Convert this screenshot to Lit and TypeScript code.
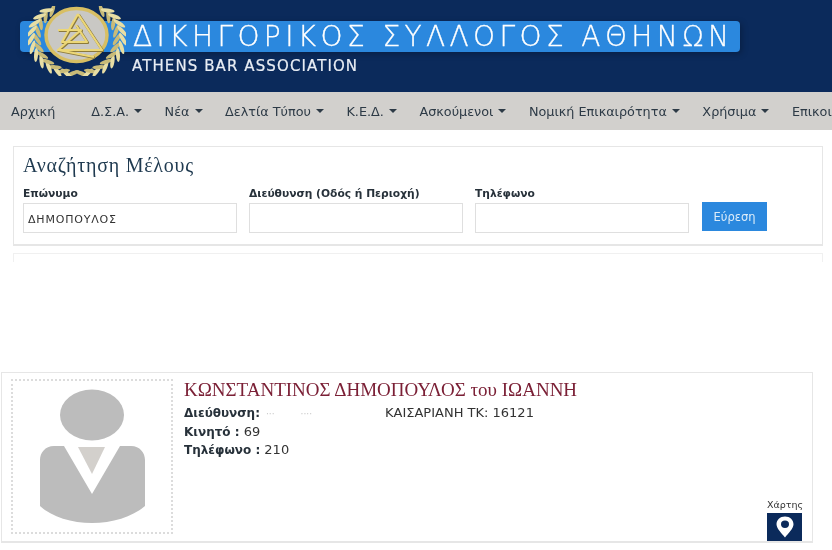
import { LitElement, html, css, svg } from "lit";
import { customElement } from "lit/decorators.js";

const NAV: [string, boolean][] = [
  ["Αρχική", false], ["Δ.Σ.Α.", true], ["Νέα", true], ["Δελτία Τύπου", true], ["Κ.Ε.Δ.", true],
  ["Ασκούμενοι", true], ["Νομική Επικαιρότητα", true], ["Χρήσιμα", true], ["Επικοινωνία", false],
];

function wreath(side: number) {
  const out = [];
  for (let i = 0; i < 11; i++) {
    const a = ((100 + i * 13) * Math.PI) / 180;
    const cx = 49 + 43 * Math.cos(a);
    const cy = 32 + 36 * Math.sin(a);
    const x = side < 0 ? cx : 98 - cx;
    const deg = ((a * 180) / Math.PI + 90) * (side < 0 ? 1 : -1);
    out.push(svg`<ellipse cx=${x - side * 3} cy=${cy} rx="7" ry="2" fill="#c9bb78" transform="rotate(${deg + side * 32} ${x - side * 3} ${cy})"/>`);
    out.push(svg`<ellipse cx=${x + side * 3} cy=${cy} rx="7" ry="2" fill="#e8dea4" transform="rotate(${deg - side * 32} ${x + side * 3} ${cy})"/>`);
  }
  return out;
}

@customElement("app-root")
export class AppRoot extends LitElement {
  static styles = css`
    :host { display: block; width: 832px; height: 550px; overflow: hidden; background: #fff; font-family: "DejaVu Sans", sans-serif; color: #222; filter: blur(0.35px); }
    .header { height: 92px; background: #0b2a5b; box-sizing: border-box; padding: 21px 0 0 20px; position: relative; }
    .bar { width: 720px; height: 31px; box-sizing: border-box; background: #2b88de; border-radius: 4px; padding-left: 113px; display: flex; align-items: center; box-shadow: 2px 2px 6px rgba(0, 0, 0, 0.25); }
    .title { font-family: "DejaVu Sans", sans-serif; font-weight: 200; font-size: 28px; letter-spacing: 4.4px; -webkit-text-stroke: 0.3px #fff; color: #fff; white-space: nowrap; line-height: 31px; }
    .sub { font-family: "DejaVu Sans", sans-serif; font-size: 15px; letter-spacing: 1.1px; -webkit-text-stroke: 0.2px #e8edf4; color: #e8edf4; margin: 5px 0 0 112px; line-height: 18px; white-space: nowrap; }
    .logo { position: absolute; left: 28px; top: 6px; }
    .nav { height: 38px; background: #d2d0cd; display: flex; align-items: center; padding-left: 11px; white-space: nowrap; font-size: 12.8px; color: #2d3a46; overflow: hidden; }
    .nav span { display: inline-flex; align-items: center; margin-right: 22.5px; flex: none; }
    .nav span:first-child { margin-right: 36px; }
    .nav i { width: 0; height: 0; border: 4.5px solid transparent; border-top-color: #2d3a46; border-bottom: 0; margin-left: 5px; }
    .main { padding: 16px 9px 0 13px; }
    .card { border: 1px solid #e6e6e6; border-bottom-width: 2px; height: 100px; box-sizing: border-box; padding: 7px 9px 0; }
    .card h2 { font: 400 20px/22px "Liberation Serif", serif; letter-spacing: 0.75px; color: #1f3a50; margin: 0 0 11px; }
    .fields { display: flex; align-items: flex-end; gap: 12px; }
    .field { width: 214px; }
    .field label { display: block; font-size: 10.7px; font-weight: 700; color: #27313a; line-height: 14px; margin-bottom: 2px; white-space: nowrap; }
    .input { height: 30px; box-sizing: border-box; border: 1px solid #dfdfdf; font-size: 11px; letter-spacing: 0.8px; line-height: 31px; padding-left: 4px; color: #333; }
    .btn { width: 65px; height: 29px; margin: 0 0 2px 1px; background: #2b88de; color: #dcecf9; font-size: 11.5px; display: flex; align-items: center; justify-content: center; }
    .stub { height: 8px; margin-top: 7px; border: 1px solid #f0f0f0; border-bottom: 0; }
    .result { margin: 110px 0 0 -12px; width: 812px; height: 171px; box-sizing: border-box; border: 1px solid #e6e6e6; border-bottom-width: 2px; padding: 6px 9px 0; display: flex; position: relative; }
    .photo { width: 162px; height: 155px; box-sizing: border-box; border: 2px dotted #dcdcdc; flex: none; }
    .photo svg { display: block; margin: -1px; }
    .info { margin-left: 11px; }
    .name { font: 400 19px/20px "Liberation Serif", serif; color: #7b2036; white-space: nowrap; margin-top: 1px; }
    .line { font-size: 13px; line-height: 18px; color: #333; white-space: nowrap; }
    .info .name + .line { margin-top: 4px; }
    .line b { color: #27313a; font-size: 12px; }
    .smudge { color: #c9c9c9; font-size: 9px; }
    .gap1 { display: inline-block; width: 6px; }
    .gap2 { display: inline-block; width: 26px; }
    .gap3 { display: inline-block; width: 73px; }
    .map { position: absolute; right: 9px; bottom: 0; display: flex; flex-direction: column; align-items: center; gap: 3px; font-size: 9.5px; color: #333; }
    .pin { width: 35px; height: 28px; background: #0b2a5b; display: flex; align-items: center; justify-content: center; }
  `;

  render() {
    return html`
      <div class="header">
        <div class="bar"><div class="title">ΔΙΚΗΓΟΡΙΚΟΣ ΣΥΛΛΟΓΟΣ ΑΘΗΝΩΝ</div></div>
        <div class="sub">ATHENS BAR ASSOCIATION</div>
        <svg class="logo" width="98" height="70" viewBox="0 0 98 70">
          ${wreath(-1)}${wreath(1)}
          <ellipse cx="48.5" cy="29" rx="30.5" ry="26.5" fill="#c9c8c4" stroke="#d8bf63" stroke-width="3.5"/>
          <g fill="none" stroke="#8c7a3a" stroke-width="2.6" stroke-linejoin="round" transform="translate(0.8 0.8)">
            <path d="M50 8 L74 44 L29 44"/>
            <path d="M50 8 L34 36 L59 36 L48 19"/>
            <path d="M30 24 L53 24 L30 44 L66 51"/>
          </g>
          <g fill="none" stroke="#ecd777" stroke-width="2.2" stroke-linejoin="round">
            <path d="M50 8 L74 44 L29 44"/>
            <path d="M50 8 L34 36 L59 36 L48 19"/>
            <path d="M30 24 L53 24 L30 44 L66 51"/>
          </g>
        </svg>
      </div>
      <div class="nav">${NAV.map(([t, c]) => html`<span>${t}${c ? html`<i></i>` : ""}</span>`)}</div>
      <div class="main">
        <div class="card">
          <h2>Αναζήτηση Μέλους</h2>
          <div class="fields">
            <div class="field"><label>Επώνυμο</label><div class="input">ΔΗΜΟΠΟΥΛΟΣ</div></div>
            <div class="field"><label>Διεύθυνση (Οδός ή Περιοχή)</label><div class="input"></div></div>
            <div class="field"><label>Τηλέφωνο</label><div class="input"></div></div>
            <div class="btn">Εύρεση</div>
          </div>
        </div>
        <div class="stub"></div>
        <div class="result">
          <div class="photo">
            <svg width="160" height="153" viewBox="0 0 160 153">
              <ellipse cx="80" cy="35" rx="32" ry="25.5" fill="#bcbcbc"/>
              <path d="M52 66 L80 114 L108 66 H119 C128 66 133 73 133 80 V126 C120 137 100 143 80 143 C60 143 40 137 28 126 V80 C28 73 33 66 42 66 Z" fill="#bcbcbc"/>
              <path d="M66 67 H93 L80 94 Z" fill="#d3d0cc"/>
            </svg>
          </div>
          <div class="info">
            <div class="name">ΚΩΝΣΤΑΝΤΙΝΟΣ ΔΗΜΟΠΟΥΛΟΣ του ΙΩΑΝΝΗ</div>
            <div class="line"><b>Διεύθυνση:</b><span class="gap1"></span><span class="smudge">···</span><span class="gap2"></span><span class="smudge">····</span><span class="gap3"></span>ΚΑΙΣΑΡΙΑΝΗ ΤΚ: 16121</div>
            <div class="line"><b>Κινητό :</b> 69</div>
            <div class="line"><b>Τηλέφωνο :</b> 210</div>
          </div>
          <div class="map">
            <div>Χάρτης</div>
            <div class="pin">
              <svg width="18" height="22" viewBox="0 0 18 22"><path fill-rule="evenodd" d="M9 0.5 C4 0.5 0.5 4 0.5 8.2 C0.5 12.5 5.5 17 9 21.5 C12.5 17 17.5 12.5 17.5 8.2 C17.5 4 14 0.5 9 0.5 Z M9 4.5 A4 3.7 0 1 1 9 11.9 A4 3.7 0 1 1 9 4.5 Z" fill="#fff"/></svg>
            </div>
          </div>
        </div>
      </div>
    `;
  }
}
